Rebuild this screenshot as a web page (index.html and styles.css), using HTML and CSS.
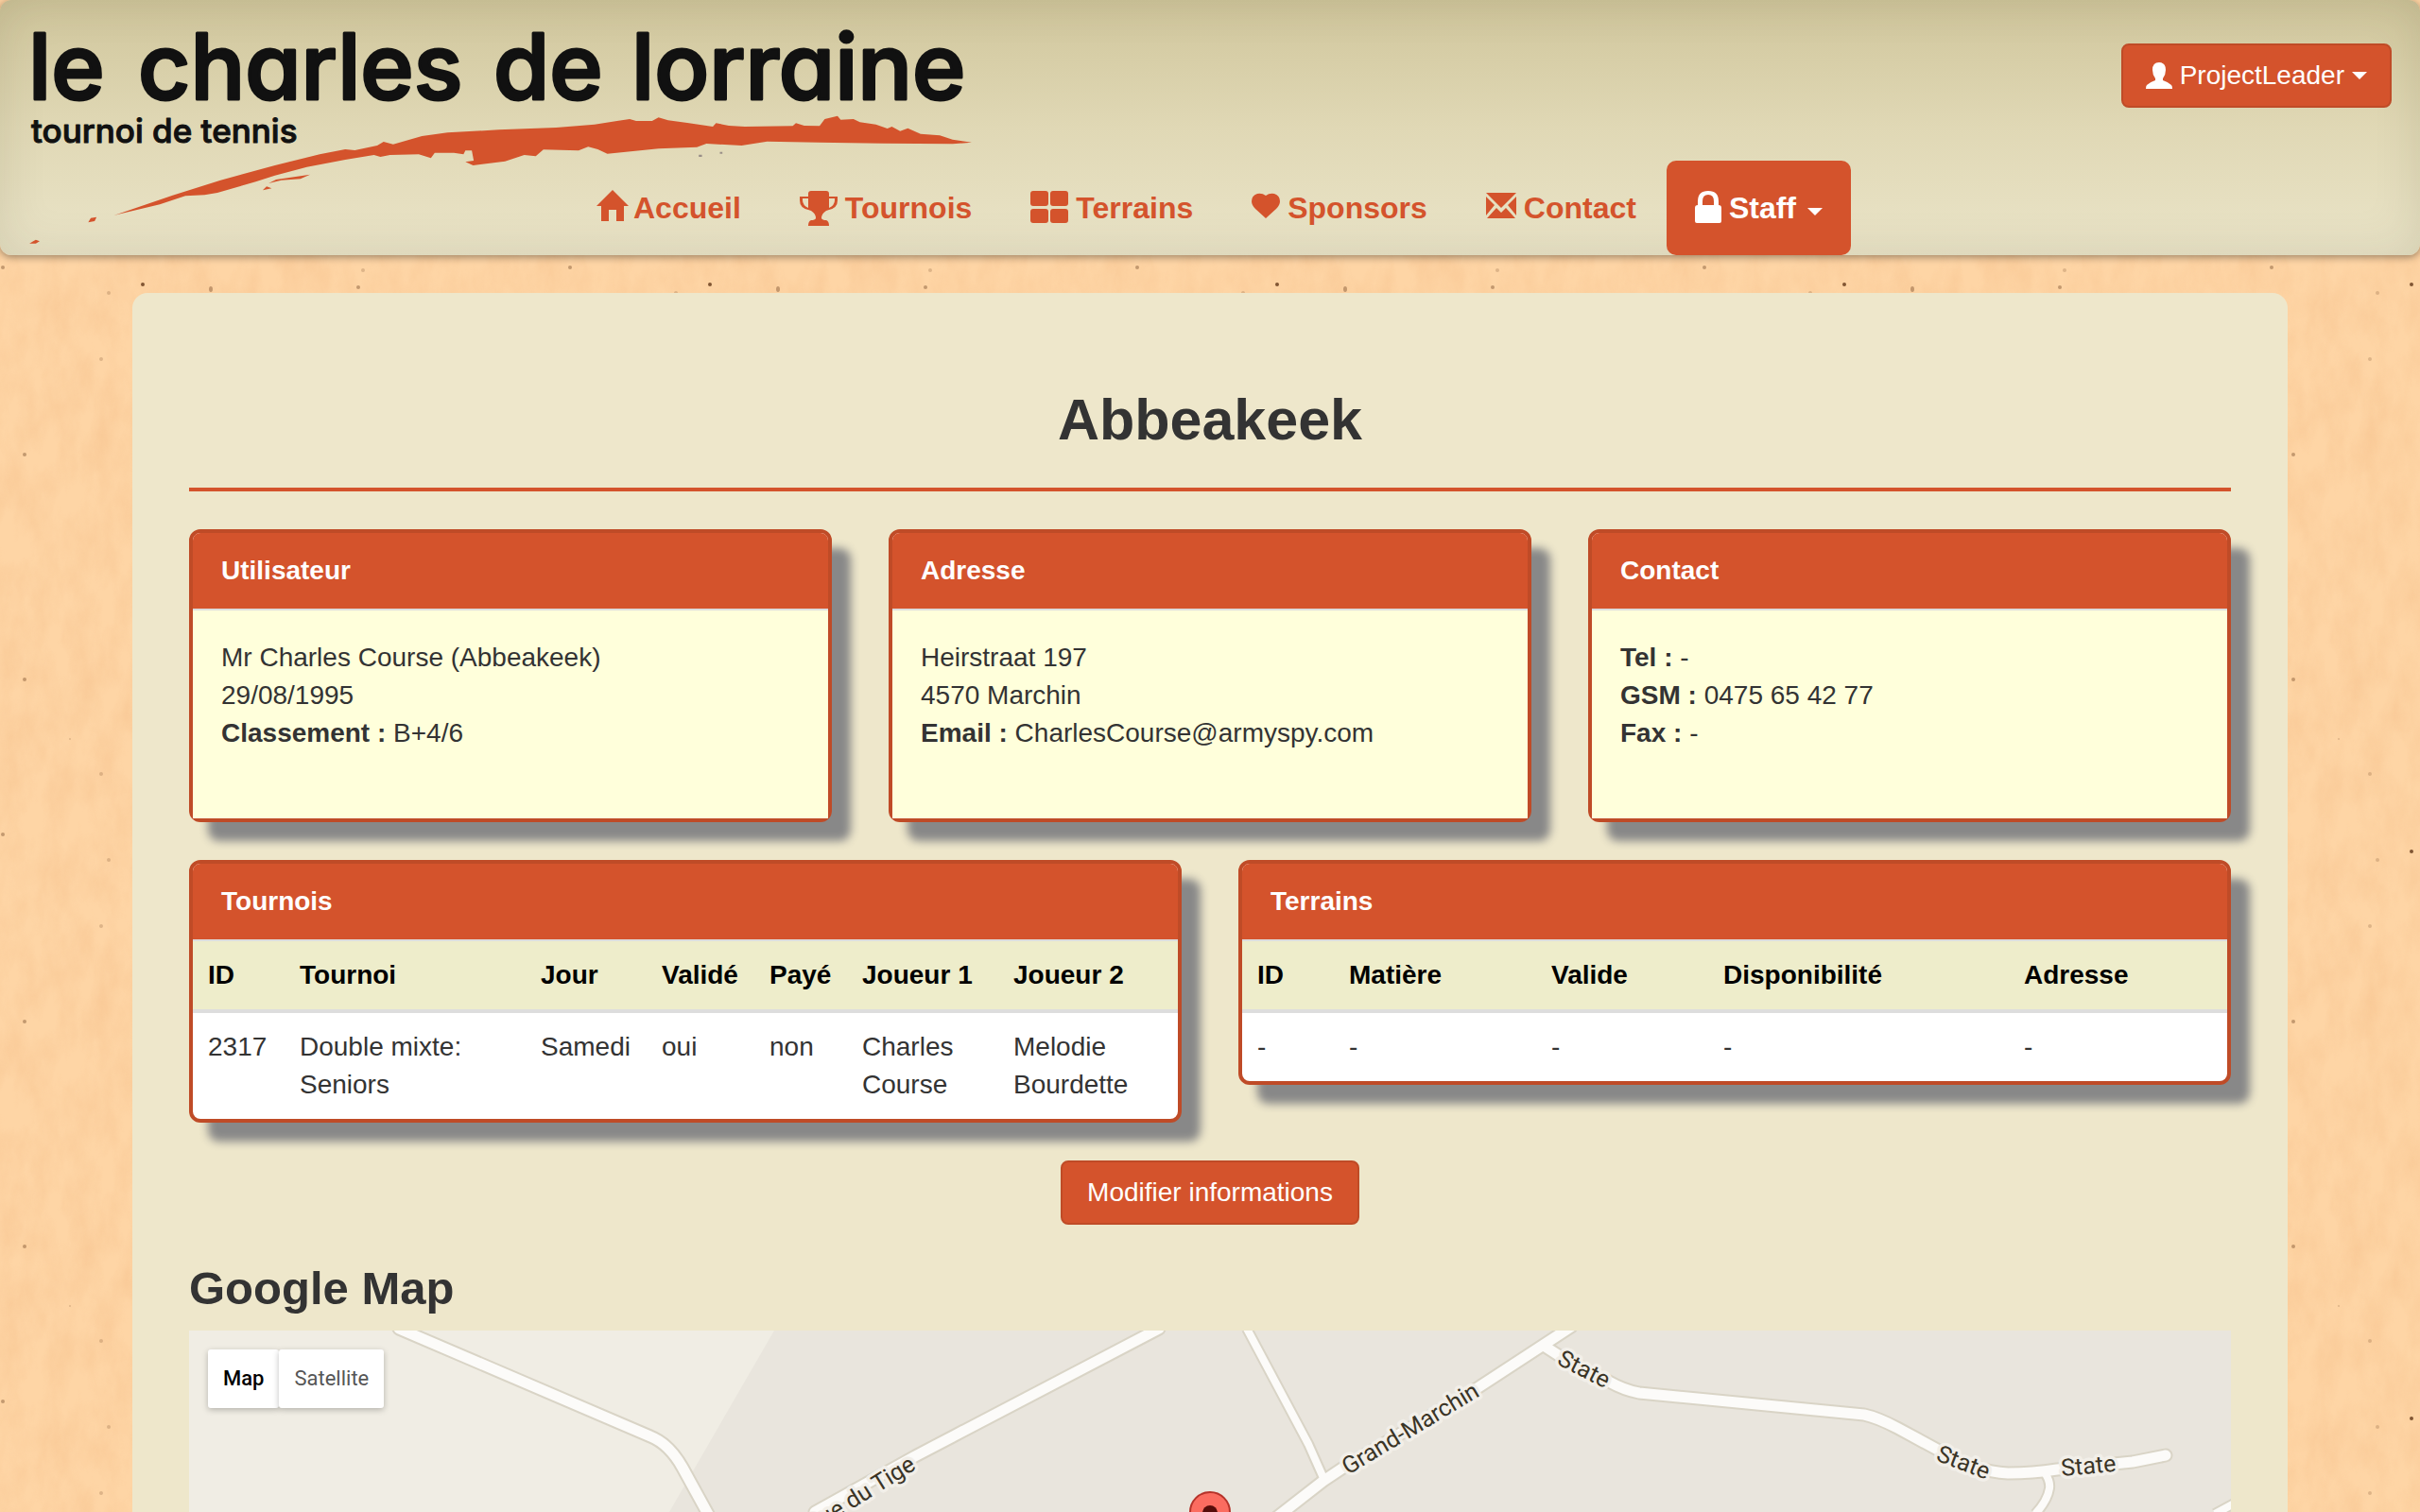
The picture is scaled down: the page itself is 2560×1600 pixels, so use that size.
FILE: index.html
```html
<!DOCTYPE html>
<html lang="fr">
<head>
<meta charset="utf-8">
<title>Le Charles de Lorraine - Abbeakeek</title>
<link rel="stylesheet" href="styles.css">
</head>
<body>
<header class="site-header">
  <a class="logo" href="#" aria-label="le charles de lorraine">
    <svg width="1060" height="270" viewBox="0 0 1060 270">
      <text class="logo-name" y="105"><tspan x="30">le</tspan> <tspan x="146">charles</tspan> <tspan x="522">de</tspan> <tspan x="668">lorraine</tspan></text>
      <text class="logo-tag" x="33" y="151">tournoi de tennis</text>
      <g transform="scale(.6763 .3333)" fill="#d4532c">
        <path d="M178 684L270 620 345 572 430 525 500 490 540 474 555 477 590 462 600 450 615 458 660 432 700 421 780 412 870 405 930 395 965 384 985 378 995 384 1020 384 1030 373 1045 382 1075 390 1115 402 1120 391 1140 399 1165 402 1240 400 1245 391 1258 399 1282 400 1290 378 1310 368 1315 380 1335 378 1345 388 1370 395 1388 408 1395 402 1408 416 1420 407 1440 425 1470 430 1490 443 1520 452 1490 457 1380 455 1280 452 1200 449 1160 462 1105 456 1090 467 1030 472 950 488 935 474 920 466 905 478 850 475 838 496 820 492 790 512 740 525 728 514 741 510 738 478 728 478 725 490 710 485 680 485 674 502 655 490 610 492 595 498 585 492 540 507 480 530 430 557 400 577 340 612 320 619 290 622 250 649 185 680z"/>
        <path d="M420 582L432 570 485 554 470 568 440 572zM411 604L417 592 425 598zM138 706L142 692 151 689 148 702zM46 773L56 761 62 766 56 773z"/>
        <path d="M1093 491h5v7h-5zM1126 482h4v6h-4z" fill="#998f88"/>
      </g>
    </svg>
  </a>
  <nav class="main-nav" aria-label="Navigation principale">
    <a href="#"><svg class="icon" width="30" height="40" viewBox="0 0 30 40"><path d="M16 1L-1 18H4V34H12V22H20V34H28V18H33z"/></svg>Accueil</a>
    <a href="#"><svg class="icon" width="40" height="40" viewBox="0 0 40 40"><path fill-rule="evenodd" d="M12 2h16q3 0 3 3v3h9v4q0 8-9 10l-3 1q-5 3-5 8 1 2 5 2 3 1 3 6H9q0-5 3-6 4 0 5-2 0-5-5-8l-3-1Q0 20 0 12V8h9V5q0-3 3-3zM9 10H3v2q0 5 6 8zM31 10v10q6-3 6-8v-2z"/></svg>Tournois</a>
    <a href="#"><svg class="icon" width="40" height="40" viewBox="0 0 40 40"><rect y="2" width="19" height="16" rx="3"/><rect x="21" y="2" width="19" height="16" rx="3"/><rect y="21" width="19" height="15" rx="3"/><rect x="21" y="21" width="19" height="15" rx="3"/></svg>Terrains</a>
    <a href="#"><svg class="icon" width="30" height="40" viewBox="0 0 30 40"><path d="M15 7Q19 4 24 5 30 7 30 13 30 17 26 21L15 31 4 21Q0 17 0 13 0 7 6 5 11 4 15 7z"/></svg>Sponsors</a>
    <a href="#"><svg class="icon" width="32" height="40" viewBox="0 0 32 40"><path d="M0 4H32L16 20zM0 8L9 17 0 28zM32 8L23 17 32 28zM1 31L11 20 16 25 21 20 31 31z"/></svg>Contact</a>
    <button class="staff" type="button"><svg class="icon" width="28" height="40" viewBox="0 0 28 40"><path fill-rule="evenodd" d="M3 17V13Q3 2 14 2T25 13V17Q28 17 28 20V34Q28 36 26 36H2Q0 36 0 34V20Q0 17 3 17zM8 17H20V13Q20 6 14 6T8 13z"/></svg>Staff<span class="caret"></span></button>
  </nav>
  <button class="btn user" type="button"><svg class="icon" width="28" height="28" viewBox="0 0 28 28"><path d="M14 0Q21 0 21 8 21 13 18 17L18 19Q24 21 27 24 28 25 28 28H0Q0 25 1 24 4 21 10 19L10 17Q7 13 7 8 7 0 14 0z"/></svg>ProjectLeader<span class="caret"></span></button>
</header>

<main class="content">
  <h1>Abbeakeek</h1>
  <hr>
  <div class="cards three">
    <section class="panel">
      <h3>Utilisateur</h3>
      <div class="panel-body">Mr Charles Course (Abbeakeek)<br>29/08/1995<br><b>Classement :</b> B+4/6</div>
    </section>
    <section class="panel">
      <h3>Adresse</h3>
      <div class="panel-body">Heirstraat 197<br>4570 Marchin<br><b>Email :</b> CharlesCourse@armyspy.com</div>
    </section>
    <section class="panel">
      <h3>Contact</h3>
      <div class="panel-body"><b>Tel :</b> -<br><b>GSM :</b> 0475 65 42 77<br><b>Fax :</b> -</div>
    </section>
  </div>
  <div class="cards two">
    <section class="panel panel-table">
      <h3>Tournois</h3>
      <table>
        <colgroup><col class="c-id"><col class="c-event"><col class="c-day"><col class="c-valid"><col class="c-paid"><col class="c-player"><col></colgroup>
        <thead><tr><th>ID</th><th>Tournoi</th><th>Jour</th><th>Validé</th><th>Payé</th><th>Joueur 1</th><th>Joueur 2</th></tr></thead>
        <tbody><tr><td>2317</td><td>Double mixte: Seniors</td><td>Samedi</td><td>oui</td><td>non</td><td>Charles Course</td><td>Melodie Bourdette</td></tr></tbody>
      </table>
    </section>
    <section class="panel panel-table">
      <h3>Terrains</h3>
      <table>
        <colgroup><col class="c-id"><col class="c-surface"><col class="c-ok"><col class="c-avail"><col></colgroup>
        <thead><tr><th>ID</th><th>Matière</th><th>Valide</th><th>Disponibilité</th><th>Adresse</th></tr></thead>
        <tbody><tr><td>-</td><td>-</td><td>-</td><td>-</td><td>-</td></tr></tbody>
      </table>
    </section>
  </div>
  <button class="btn edit" type="button">Modifier informations</button>
  <h2>Google Map</h2>
  <div class="map">
    <svg class="map-canvas" viewBox="0 0 2160 192" preserveAspectRatio="xMidYMin slice" role="img" aria-label="Carte de Marchin">
      <rect width="2160" height="192" fill="#e9e5dd"/>
      <path d="M0 0H619L508 192H0z" fill="#f0ede4"/>
      <defs>
        <g id="roads" fill="none" stroke-linejoin="round">
          <path d="M1119 -2L1184 120 1200 156M1964 152Q1969 160 1968 167 1966 180 1953 194M2165 182L2143 194"/>
        </g>
        <g id="main-roads" fill="none" stroke-linejoin="round" stroke-linecap="round">
          <path d="M222 -2L488 112Q508 120 522 145L550 196M1026 -2L810 111 768 133 662 192M1462 -4L1361 62 1221 145 1200 159 1150 198M1433 16L1450 27 1502 54Q1518 63 1534 66L1772 89Q1786 92 1807 103L1855 129Q1890 149 1924 151 1950 151 1976 147L2056 139 2091 132"/>
        </g>
      </defs>
      <use href="#roads" stroke="#d9d4c6" stroke-width="12"/>
      <use href="#main-roads" stroke="#d9d4c6" stroke-width="15"/>
      <use href="#roads" stroke="#fcfbf9" stroke-width="8"/>
      <use href="#main-roads" stroke="#fcfbf9" stroke-width="11"/>
      <g class="map-label">
        <text transform="translate(770 146) rotate(-32)" text-anchor="end">Rue du Tige</text>
        <text transform="translate(1226 153) rotate(-31)">Grand-Marchin</text>
        <text transform="translate(1446 35) rotate(27)">State</text>
        <text transform="translate(1847 137) rotate(21)">State</text>
        <text transform="translate(1981 154) rotate(-5)">State</text>
      </g>
      <path d="M1080 171A21 21 0 0 1 1101 192V194H1059V192A21 21 0 0 1 1080 171z" fill="#fb6c60" stroke="#b6332a" stroke-width="2"/>
      <circle cx="1080" cy="193" r="8" fill="#560d0a"/>
    </svg>
    <div class="map-type"><button class="active" type="button">Map</button><button type="button">Satellite</button></div>
  </div>
</main>
</body>
</html>
```
FILE: styles.css
```css
* { box-sizing: border-box; }

body {
  margin: 0;
  min-height: 100vh;
  display: flex;
  flex-direction: column;
  color: #333;
  font: 28px/40px "Liberation Sans", Arial, sans-serif;
  background: #fed5a5 url("data:image/svg+xml,%3Csvg xmlns='http://www.w3.org/2000/svg' width='600' height='600'%3E%3Cfilter id='n' x='0' y='0' width='100%25' height='100%25' color-interpolation-filters='sRGB'%3E%3CfeTurbulence type='fractalNoise' baseFrequency='.04 .02' numOctaves='5' stitchTiles='stitch'/%3E%3CfeColorMatrix values='0 0 0 0 .96 0 0 0 0 .74 0 0 0 0 .53 .7 0 0 0 -.22'/%3E%3C/filter%3E%3Crect width='600' height='600' filter='url(%23n)'/%3E%3Cg fill='%236b4020'%3E%3Cellipse cx='151' cy='301' rx='2' ry='2' opacity='.85'/%3E%3Cg opacity='.4'%3E%3Cellipse cx='223' cy='306' rx='2' ry='3'/%3E%3Ccircle cx='379' cy='304' r='2'/%3E%3Ccircle cx='3' cy='283' r='2'/%3E%3Ccircle cx='26' cy='481' r='2'/%3E%3Ccircle cx='26' cy='119' r='2'/%3E%3C/g%3E%3Cg opacity='.22'%3E%3Ccircle cx='107' cy='380' r='2'/%3E%3Ccircle cx='115' cy='310' r='2'/%3E%3Ccircle cx='384' cy='286' r='2'/%3E%3Ccircle cx='107' cy='219' r='2'/%3E%3Ccircle cx='74' cy='182' r='1'/%3E%3C/g%3E%3C/g%3E%3C/svg%3E");
}

button { font: inherit; cursor: pointer; }

/* Header: logo, navigation and user menu share one grid cell */
.site-header {
  display: grid;
  border-radius: 12px;
  background: linear-gradient(#d0c69c, #e0d8b5 50%, #eae4c8);
  box-shadow: inset 0 0 50px rgba(60, 55, 20, .13), 0 2px 8px rgba(0, 0, 0, .4);
}
.site-header > * { grid-area: 1 / 1; }
.logo { justify-self: start; }
.logo svg { display: block; }
.logo text {
  font-family: Inter, sans-serif;
  font-feature-settings: "cv11", "ss03";
  fill: #111;
  stroke: #111;
  stroke-linejoin: round;
}
.logo-name { font-size: 96px; font-weight: 500; stroke-width: 3px; }
.logo-tag { font-size: 35px; font-weight: 500; }

.main-nav {
  display: flex;
  gap: 2px;
  align-self: end;
  justify-self: center;
  font-size: 32px;
  font-weight: 700;
}
.main-nav a,
.staff {
  display: flex;
  align-items: center;
  gap: 8px;
  padding: 30px;
  border: 0;
  border-radius: 10px;
  color: #d4532c;
  text-decoration: none;
}
.main-nav .staff { background: #d4532c; color: #fff; }
.icon { fill: currentColor; overflow: visible; flex: none; }
.caret {
  border: 8px solid transparent;
  border-top-color: currentColor;
  border-bottom: 0;
}
.staff .caret { margin: 8px 0 0 4px; }

.btn {
  display: flex;
  align-items: center;
  gap: 8px;
  padding: 12px 24px;
  border: 2px solid #bf4b27;
  border-radius: 8px;
  background: #d4532c;
  color: #fff;
}
.user { align-self: start; justify-self: end; margin: 46px 30px 0 0; }

/* Page content */
.content {
  flex: 1;
  display: flex;
  flex-direction: column;
  width: calc(100% - 280px);
  margin: 40px auto 0;
  padding: 100px 60px 0;
  border-radius: 16px 16px 0 0;
  background: #eee7cb;
}
h1 { margin: 0 0 38px; font-size: 61px; line-height: 68px; text-align: center; }
hr { width: 100%; height: 4px; margin: 0 0 40px; border: 0; background: #d4532c; }
h2 { margin: 40px 0 18px; font-size: 49px; line-height: 54px; }

.cards { display: grid; gap: 60px; margin-bottom: 40px; align-items: start; }
.three { grid-template-columns: repeat(3, 1fr); }
.two { grid-template-columns: repeat(2, 1fr); }

.panel {
  border: 4px solid #bf4b27;
  border-radius: 12px;
  background: #fff;
  box-shadow: 20px 20px 10px #888;
}
.panel h3 {
  margin: 0;
  padding: 20px 30px;
  border-bottom: 2px solid #ddd;
  border-radius: 8px 8px 0 0;
  background: #d4532c;
  color: #fff;
  font-size: 28px;
  line-height: 40px;
}
.panel-body { min-height: 220px; padding: 30px; background: #ffffdb; }

table { width: 100%; table-layout: fixed; border-collapse: separate; border-spacing: 0; }
th, td { padding: 16px; text-align: left; vertical-align: top; }
th { background: #eeedcb; color: #000; border-bottom: 4px solid #ddd; white-space: nowrap; }
.c-id { width: 97px; }
.c-event { width: 255px; }
.c-day { width: 128px; }
.c-valid { width: 114px; }
.c-paid { width: 98px; }
.c-player { width: 160px; }
.c-surface { width: 214px; }
.c-ok { width: 182px; }
.c-avail { width: 318px; }

.edit { align-self: center; padding: 12px 26px; }

.map { position: relative; flex: 1; min-height: 192px; overflow: hidden; }
.map-canvas { position: absolute; inset: 0; width: 100%; height: 100%; }
.map-label {
  font-family: Roboto, sans-serif;
  font-size: 25px;
  fill: #3a3426;
  stroke: #f2efe9;
  stroke-width: 7px;
  stroke-linejoin: round;
  paint-order: stroke;
}
.map-type { position: absolute; left: 20px; top: 20px; display: flex; }
.map-type button {
  padding: 11px 16px;
  border: 0;
  border-radius: 3px;
  background: #fff;
  color: #565656;
  font: 22px/40px Roboto, sans-serif;
  box-shadow: 0 2px 6px rgba(0, 0, 0, .25);
}
.map-type .active { color: #000; font-weight: 500; }
```
